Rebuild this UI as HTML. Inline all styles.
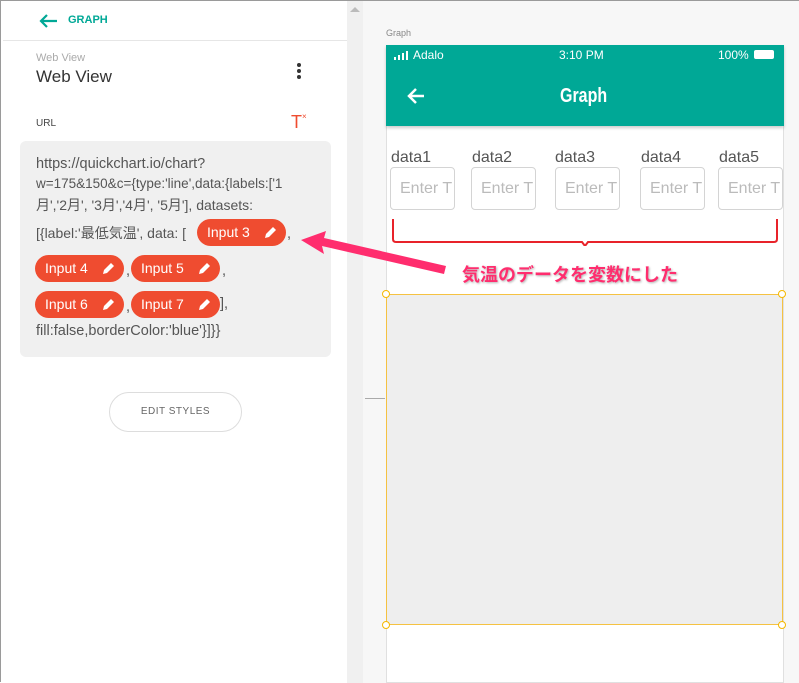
<!DOCTYPE html>
<html><head><meta charset="utf-8"><style>
*{box-sizing:border-box;margin:0;padding:0}
body{width:799px;height:682px;overflow:hidden;background:#fff;font-family:"Liberation Sans","Noto Sans CJK JP",sans-serif;position:relative;border:1px solid #9a9a9a}
.abs{position:absolute}
.chip{position:absolute;height:27px;background:#ef4c30;color:#fff;border-radius:14px;font-size:14px;line-height:27px;padding-left:10px;width:89px}
.chip svg{position:absolute;right:9px;top:7px}
.lbl{position:absolute;font-size:16px;color:#555;top:148px}
.inp{position:absolute;top:166px;width:65px;height:43px;border:1px solid #d4d4d4;border-radius:4px;color:#bbb;font-size:16px;line-height:42px;padding-left:9px;overflow:hidden;white-space:nowrap}
.t{position:absolute;font-size:14.5px;color:#555;white-space:nowrap}
</style></head><body>
<div class="abs" style="left:0;top:0;width:346px;height:682px;background:#fff"></div>
<svg class="abs" style="left:37px;top:12px" width="20" height="16"><path d="M19 8H3M9 2L3 8l6 6" stroke="#00a896" stroke-width="2.2" fill="none"/></svg>
<div class="abs" style="left:67px;top:13px;font-size:11px;font-weight:bold;color:#00a896">GRAPH</div>
<div class="abs" style="left:2px;top:39px;width:344px;height:1px;background:#e6e6e6"></div>
<div class="abs" style="left:35px;top:51px;font-size:11px;color:#aaa">Web View</div>
<div class="abs" style="left:35px;top:66px;font-size:17px;color:#333">Web View</div>
<div class="abs" style="left:296px;top:62px;width:4px;height:4px;border-radius:2px;background:#333;box-shadow:0 6px 0 #333,0 12px 0 #333"></div>
<div class="abs" style="left:35px;top:117px;font-size:10px;color:#444">URL</div>
<div class="abs" style="left:290px;top:111px;font-size:18px;color:#ef4c30">T</div>
<div class="abs" style="left:301px;top:111px;font-size:8px;color:#ef4c30">×</div>
<div class="abs" style="left:19px;top:140px;width:311px;height:216px;background:#f0f0f0;border-radius:6px"></div>
<div class="t" style="left:35px;top:155px">https://quickchart.io/chart?</div>
<div class="t" style="left:35px;top:175px;font-size:13.5px">w=175&amp;150&amp;c={type:'line',data:{labels:['1</div>
<div class="t" style="left:35px;top:194px;font-size:14px">月','2月', '3月','4月', '5月'], datasets:</div>
<div class="t" style="left:35px;top:222px;font-size:14px">[{label:'最低気温', data: [</div>
<div class="t" style="left:286px;top:225px">,</div>
<div class="chip" style="left:196px;top:218px">Input 3<svg width="13" height="13"><path d="M1 12l1-4 7-7 3 3-7 7z" fill="#fff"/></svg></div>
<div class="chip" style="left:34px;top:254px">Input 4<svg width="13" height="13"><path d="M1 12l1-4 7-7 3 3-7 7z" fill="#fff"/></svg></div>
<div class="t" style="left:125px;top:262px">,</div>
<div class="chip" style="left:130px;top:254px">Input 5<svg width="13" height="13"><path d="M1 12l1-4 7-7 3 3-7 7z" fill="#fff"/></svg></div>
<div class="t" style="left:221px;top:262px">,</div>
<div class="chip" style="left:34px;top:290px">Input 6<svg width="13" height="13"><path d="M1 12l1-4 7-7 3 3-7 7z" fill="#fff"/></svg></div>
<div class="t" style="left:125px;top:298px">,</div>
<div class="chip" style="left:130px;top:290px">Input 7<svg width="13" height="13"><path d="M1 12l1-4 7-7 3 3-7 7z" fill="#fff"/></svg></div>
<div class="t" style="left:219px;top:295px">],</div>
<div class="t" style="left:35px;top:322px">fill:false,borderColor:'blue'}]}}</div>
<div class="abs" style="left:108px;top:391px;width:133px;height:40px;border:1px solid #ddd;border-radius:20px;font-size:10px;color:#666;text-align:center;line-height:38px;letter-spacing:.5px">EDIT STYLES</div>
<div class="abs" style="left:346px;top:0;width:16px;height:682px;background:#f0f0f0"></div>
<div class="abs" style="left:349px;top:6px;width:0;height:0;border:5px solid transparent;border-bottom:5px solid #bbb;border-top:0"></div>
<div class="abs" style="left:362px;top:0;width:436px;height:682px;background:#f7f7f7"></div>
<div class="abs" style="left:364px;top:397px;width:20px;height:1px;background:#aaa"></div>
<div class="abs" style="left:385px;top:27px;font-size:9px;color:#888">Graph</div>
<div class="abs" style="left:385px;top:44px;width:398px;height:638px;background:#fff;border:1px solid #e0e0e0"></div>
<div class="abs" style="left:385px;top:44px;width:398px;height:81px;background:#00a896;box-shadow:0 2px 3px rgba(0,0,0,.2)"></div>
<svg class="abs" style="left:393px;top:50px" width="14" height="9"><rect x="0" y="6" width="2" height="3" fill="#fff"/><rect x="4" y="4" width="2" height="5" fill="#fff"/><rect x="8" y="2" width="2" height="7" fill="#fff"/><rect x="12" y="0" width="2" height="9" fill="#fff"/></svg>
<div class="abs" style="left:412px;top:47px;font-size:12px;color:#fff">Adalo</div>
<div class="abs" style="left:558px;top:47px;font-size:12px;color:#fff">3:10 PM</div>
<div class="abs" style="left:717px;top:47px;font-size:12px;color:#fff">100%</div>
<div class="abs" style="left:753px;top:49px;width:20px;height:9px;border:1px solid #fff;background:#fff;border-radius:2px"></div>
<svg class="abs" style="left:405px;top:86px" width="20" height="18"><path d="M18 9H3M10 2L3 9l7 7" stroke="#fff" stroke-width="2.5" fill="none"/></svg>
<div class="abs" style="left:559px;top:84px;font-size:20px;font-weight:bold;color:#fff;transform:scaleX(.8);transform-origin:left">Graph</div>
<div class="lbl" style="left:390px">data1</div><div class="lbl" style="left:471px">data2</div><div class="lbl" style="left:554px">data3</div><div class="lbl" style="left:640px">data4</div><div class="lbl" style="left:718px">data5</div>
<div class="inp" style="left:389px">Enter T</div><div class="inp" style="left:470px">Enter T</div><div class="inp" style="left:554px">Enter T</div><div class="inp" style="left:639px">Enter T</div><div class="inp" style="left:717px">Enter T</div>
<svg class="abs" style="left:385px;top:215px" width="400" height="30"><path d="M7 3v20q0 3 3 3h186l3 4 3-4h186q3 0 3-3V3" stroke="#e8232a" stroke-width="2" fill="none"/></svg>
<div class="abs" style="left:385px;top:293px;width:397px;height:331px;background:#eee;border:1px solid #f5c242"></div>
<div class="abs" style="left:381px;top:289px;width:8px;height:8px;border:1px solid #f5b800;border-radius:50%;background:#fff"></div>
<div class="abs" style="left:777px;top:289px;width:8px;height:8px;border:1px solid #f5b800;border-radius:50%;background:#fff"></div>
<div class="abs" style="left:381px;top:620px;width:8px;height:8px;border:1px solid #f5b800;border-radius:50%;background:#fff"></div>
<div class="abs" style="left:777px;top:620px;width:8px;height:8px;border:1px solid #f5b800;border-radius:50%;background:#fff"></div>
<svg class="abs" style="left:295px;top:225px" width="160" height="60"><path d="M5 14L30 5 28 12 150 40 148 48 26 20 28 28z" fill="#ff2d6e"/></svg>
<div class="abs" style="left:461px;top:260px;font-size:18px;font-weight:bold;color:#ff2d6e;text-shadow:1px 1px 2px rgba(0,0,0,.3)">気温のデータを変数にした</div>
</body></html>
